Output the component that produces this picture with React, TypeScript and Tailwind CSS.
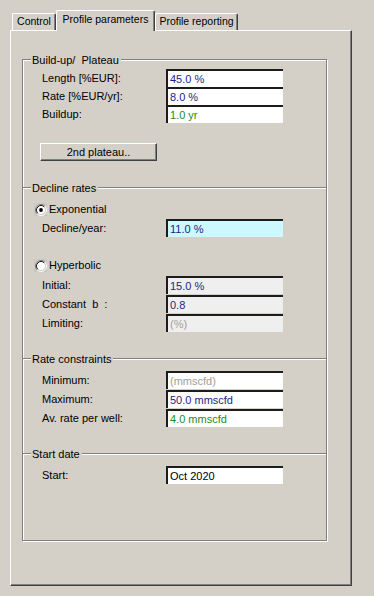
import React from "react";

const NAVY = "text-[#1e1e86]";
const GREEN = "text-[#1f8a1f]";
const GRAY = "text-[#a0a0a0]";
const BLACK = "text-black";

function Field({ value, color, bg }: { value: string; color: string; bg: string }) {
  return (
    <div
      className={`w-[117px] h-[18px] border-t-2 border-l-2 border-[#1c1c1c] ${bg} pl-[2px] flex items-center text-[11px] leading-none whitespace-nowrap ${color}`}
    >
      {value}
    </div>
  );
}

function Row({ label, value, color, bg = "bg-white" }: { label: string; value: string; color: string; bg?: string }) {
  return (
    <div className="flex items-center h-[18px]">
      <div className="w-[143px] pl-[19px] whitespace-pre text-[11px] text-black">{label}</div>
      <Field value={value} color={color} bg={bg} />
    </div>
  );
}

function Header({ label }: { label: string }) {
  return (
    <div className="flex items-center h-[2px]">
      <div className="w-[8px] h-[2px] border-t border-[#808080] border-b border-b-white" />
      <div className="pl-[1px] pr-[2px] whitespace-pre text-[11px] leading-[13px] text-black">{label}</div>
      <div className="flex-1 h-[2px] border-t border-[#808080] border-b border-b-white" />
    </div>
  );
}

function Radio({ checked, label }: { checked: boolean; label: string }) {
  return (
    <div className="flex items-center h-[13px] pl-[11px]">
      <div className="w-[13px] h-[13px] bg-[#ccc9c1] flex items-center justify-center">
        <svg width="12" height="12" viewBox="0 0 12 12">
          <circle cx="6" cy="6" r="4.2" fill="#ffffff" />
          <path d="M9.89 2.11 A5.5 5.5 0 0 0 2.11 9.89" fill="none" stroke="#808080" strokeWidth="1" />
          <path d="M2.11 9.89 A5.5 5.5 0 0 0 9.89 2.11" fill="none" stroke="#ffffff" strokeWidth="1" />
          <path d="M9.18 2.82 A4.5 4.5 0 0 0 2.82 9.18" fill="none" stroke="#202020" strokeWidth="1" />
          <path d="M2.82 9.18 A4.5 4.5 0 0 0 9.18 2.82" fill="none" stroke="#d4d0c8" strokeWidth="1" />
          {checked && <circle cx="6" cy="6" r="1.9" fill="#000000" />}
        </svg>
      </div>
      <div className="pl-[2px] text-[11px] text-black">{label}</div>
    </div>
  );
}

function Tab({ label, active, w }: { label: string; active?: boolean; w: string }) {
  if (active) {
    return (
      <div className={`relative z-10 -mb-px h-[21px] ${w} bg-[#d4d0c8] border-l border-t border-white border-r border-r-[#404040] rounded-t-[2px] shadow-[inset_-1px_0_0_#808080] flex items-center justify-center pb-[2px] text-[10.5px] text-black whitespace-nowrap`}>
        {label}
      </div>
    );
  }
  return (
    <div className={`h-[17px] ${w} bg-[#d4d0c8] border-l border-t border-white border-r border-r-[#404040] rounded-t-[2px] shadow-[inset_-1px_0_0_#808080] flex items-center justify-center text-[10.5px] text-black whitespace-nowrap`}>
      {label}
    </div>
  );
}

export default function App() {
  return (
    <div className="w-[374px] h-[596px] bg-[#d4d0c8] font-['Liberation_Sans',Arial,sans-serif] overflow-hidden">
      <div className="flex items-end h-[30px] pl-[12px]">
        <Tab label="Control" w="w-[44px]" />
        <Tab label="Profile parameters" active w="w-[99px]" />
        <Tab label="Profile reporting" w="w-[83px]" />
      </div>
      <div className="ml-[10px] w-[342px] h-[556px] border-l border-t border-white border-r border-b border-r-[#404040] border-b-[#404040] shadow-[inset_-1px_-1px_0_#808080] pt-[28px]">
        <div className="ml-[11px] w-[305px] border-l border-r border-b border-[#808080] shadow-[1px_1px_0_#ffffff,inset_1px_0_0_#ffffff] pb-[56px] flex flex-col">
          <Header label="Build-up/  Plateau" />
          <div className="mt-[8px] flex flex-col">
            <Row label="Length [%EUR]:" value="45.0 %" color={NAVY} />
            <Row label="Rate [%EUR/yr]:" value="8.0 %" color={NAVY} />
            <Row label="Buildup:" value="1.0 yr" color={GREEN} />
          </div>
          <div className="mt-[20px] ml-[17px] w-[117px] h-[18px] border-l border-t border-white border-r border-b border-r-[#404040] border-b-[#404040] shadow-[inset_-1px_-1px_0_#808080] flex items-center justify-center text-[11px] text-black">
            2nd plateau..
          </div>

          <div className="mt-[26px]">
            <Header label="Decline rates" />
          </div>
          <div className="mt-[14px]">
            <Radio checked label="Exponential" />
          </div>
          <div className="mt-[3px]">
            <Row label="Decline/year:" value="11.0 %" color={NAVY} bg="bg-[#ccf8ff]" />
          </div>
          <div className="mt-[22px]">
            <Radio checked={false} label="Hyperbolic" />
          </div>
          <div className="mt-[4px] flex flex-col gap-[1px]">
            <Row label="Initial:" value="15.0 %" color={NAVY} bg="bg-[#efefef]" />
            <Row label="Constant  b  :" value="0.8" color={NAVY} bg="bg-[#efefef]" />
            <Row label="Limiting:" value="(%)" color={GRAY} bg="bg-[#efefef]" />
          </div>

          <div className="mt-[26px]">
            <Header label="Rate constraints" />
          </div>
          <div className="mt-[11px] flex flex-col gap-[1px]">
            <Row label="Minimum:" value="(mmscfd)" color={GRAY} />
            <Row label="Maximum:" value="50.0 mmscfd" color={NAVY} />
            <Row label="Av. rate per well:" value="4.0 mmscfd" color={GREEN} />
          </div>

          <div className="mt-[26px]">
            <Header label="Start date" />
          </div>
          <div className="mt-[11px]">
            <Row label="Start:" value="Oct 2020" color={BLACK} />
          </div>
        </div>
      </div>
    </div>
  );
}
